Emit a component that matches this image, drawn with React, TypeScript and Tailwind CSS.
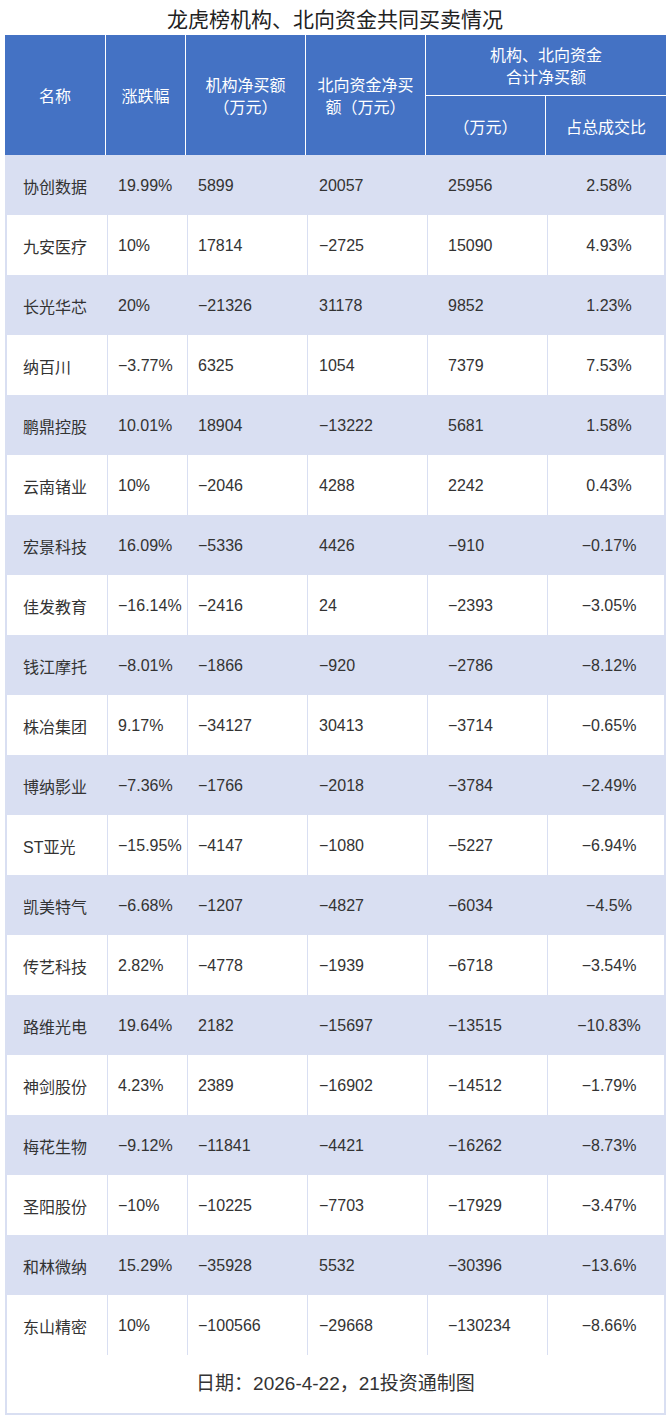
import React from 'react';

type Row = [string, string, string, string, string, string];

const ROWS: Row[] = [
    ['协创数据', '19.99%', '5899', '20057', '25956', '2.58%'],
    ['九安医疗', '10%', '17814', '−2725', '15090', '4.93%'],
    ['长光华芯', '20%', '−21326', '31178', '9852', '1.23%'],
    ['纳百川', '−3.77%', '6325', '1054', '7379', '7.53%'],
    ['鹏鼎控股', '10.01%', '18904', '−13222', '5681', '1.58%'],
    ['云南锗业', '10%', '−2046', '4288', '2242', '0.43%'],
    ['宏景科技', '16.09%', '−5336', '4426', '−910', '−0.17%'],
    ['佳发教育', '−16.14%', '−2416', '24', '−2393', '−3.05%'],
    ['钱江摩托', '−8.01%', '−1866', '−920', '−2786', '−8.12%'],
    ['株冶集团', '9.17%', '−34127', '30413', '−3714', '−0.65%'],
    ['博纳影业', '−7.36%', '−1766', '−2018', '−3784', '−2.49%'],
    ['ST亚光', '−15.95%', '−4147', '−1080', '−5227', '−6.94%'],
    ['凯美特气', '−6.68%', '−1207', '−4827', '−6034', '−4.5%'],
    ['传艺科技', '2.82%', '−4778', '−1939', '−6718', '−3.54%'],
    ['路维光电', '19.64%', '2182', '−15697', '−13515', '−10.83%'],
    ['神剑股份', '4.23%', '2389', '−16902', '−14512', '−1.79%'],
    ['梅花生物', '−9.12%', '−11841', '−4421', '−16262', '−8.73%'],
    ['圣阳股份', '−10%', '−10225', '−7703', '−17929', '−3.47%'],
    ['和林微纳', '15.29%', '−35928', '5532', '−30396', '−13.6%'],
    ['东山精密', '10%', '−100566', '−29668', '−130234', '−8.66%'],
];

const COLS = 'grid grid-cols-[100px_80px_120px_120px_120px_121px]';

export default function App() {
    return (
        <div
            className="w-[670px] h-[1420px] bg-white text-[#333] overflow-hidden"
            style={{ fontFamily: '"Liberation Sans", "Noto Sans CJK SC", sans-serif' }}
        >
            {/* Title */}
            <div className="h-[35px] flex items-center justify-center pt-[4px] text-[21px] text-[#222]">
                龙虎榜机构、北向资金共同买卖情况
            </div>

            <div className="ml-[5px] w-[661px]">
                {/* Header */}
                <div className={`${COLS} grid-rows-[60px_60px] bg-[#4472c4] text-white text-[16px] leading-[22px]`}>
                    <div className="row-span-2 flex items-center justify-center pt-[3px]">名称</div>
                    <div className="row-span-2 flex items-center justify-center pt-[3px] border-l border-white">涨跌幅</div>
                    <div className="row-span-2 flex items-center justify-center text-center pt-[3px] border-l border-white">
                        机构净买额<br />（万元）
                    </div>
                    <div className="row-span-2 flex items-center justify-center text-center pt-[3px] border-l border-white">
                        北向资金净买<br />额（万元）
                    </div>
                    <div className="col-span-2 flex items-center justify-center text-center border-l border-white pt-[4px]">
                        机构、北向资金<br />合计净买额
                    </div>
                    <div className="flex items-center justify-center border-l border-t border-white pt-[4px]">（万元）</div>
                    <div className="flex items-center justify-center border-l border-t border-white pt-[4px]">占总成交比</div>
                </div>

                {/* Body */}
                {ROWS.map((r, i) => (
                    <div
                        key={r[0]}
                        className={`${COLS} h-[60px] text-[16px] border-x-2 border-[#d9dff2] ${i % 2 === 0 ? 'bg-[#d9dff2]' : 'bg-white'}`}
                    >
                        <div className="flex items-center pl-[18px] pt-[5px] -ml-[2px]">{r[0]}</div>
                        <div className="flex items-center pl-[10px] pt-[2px] whitespace-nowrap border-l border-[#d9dff2]">{r[1]}</div>
                        <div className="flex items-center pl-[10px] pt-[2px] border-l border-[#d9dff2]">{r[2]}</div>
                        <div className="flex items-center pl-[11px] pt-[2px] border-l border-[#d9dff2]">{r[3]}</div>
                        <div className="flex items-center pl-[20px] pt-[2px] border-l border-[#d9dff2]">{r[4]}</div>
                        <div className="flex items-center justify-center pt-[2px] border-l border-[#d9dff2] -mr-[2px]">{r[5]}</div>
                    </div>
                ))}

                {/* Footer */}
                <div className="h-[60px] flex items-center justify-center border-2 border-t-0 border-[#d9dff2] text-[19px]">
                    日期：2026-4-22，21投资通制图
                </div>
            </div>
        </div>
    );
}
